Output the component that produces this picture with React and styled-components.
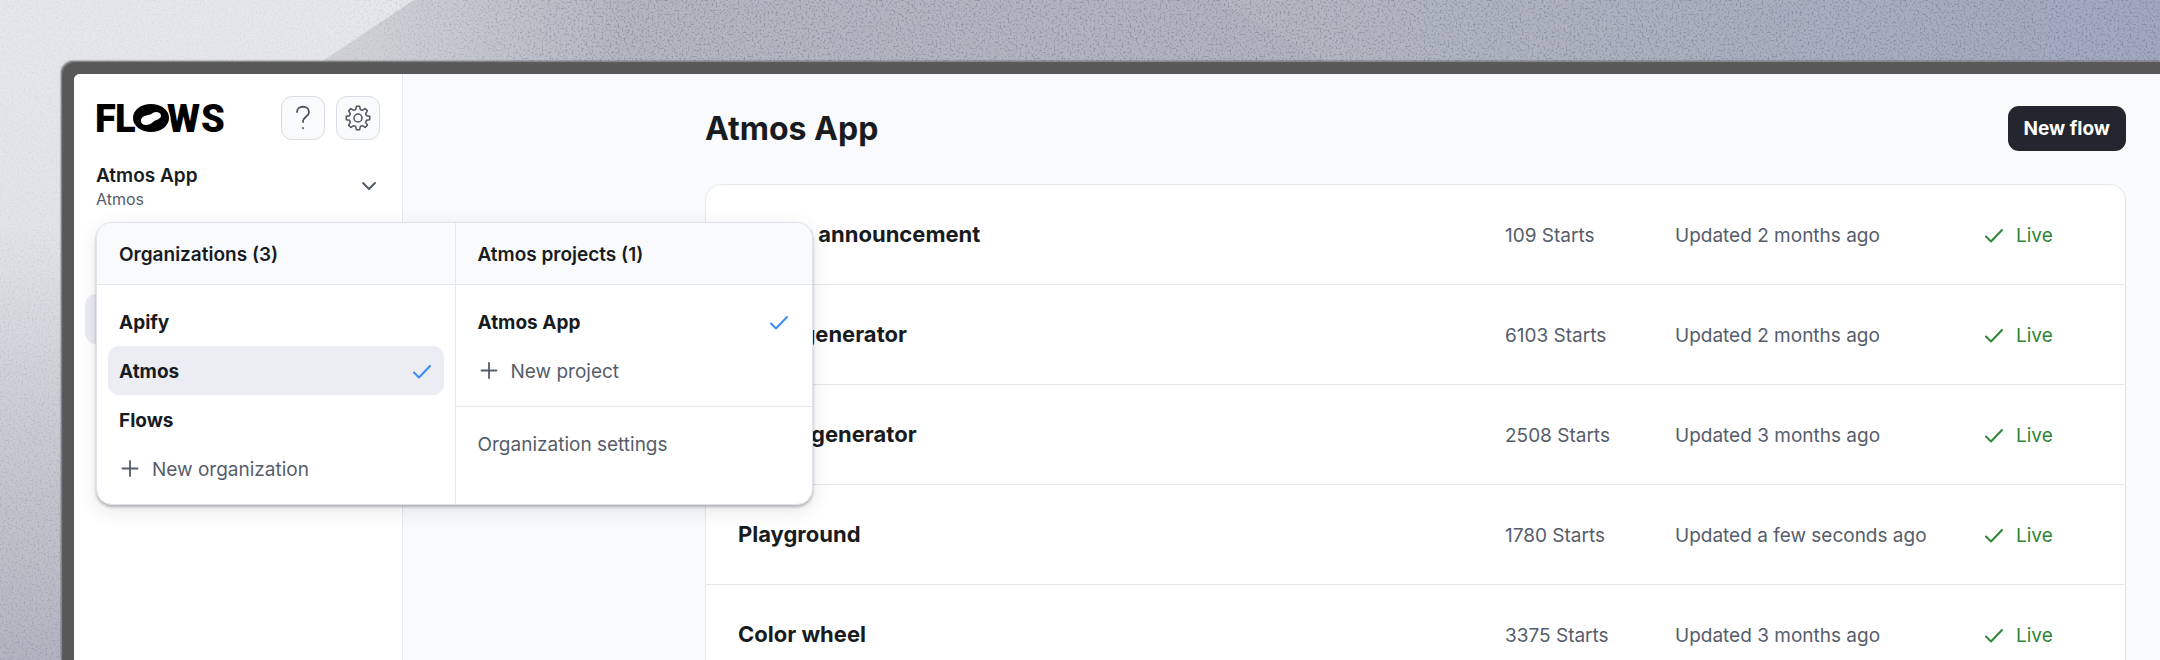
import React from "react";
import styled, { createGlobalStyle, css } from "styled-components";

const GlobalStyle = createGlobalStyle`
  *, *::before, *::after { box-sizing: border-box; }
  body {
    margin: 0;
    overflow: hidden;
    font-family: Inter, "Liberation Sans", sans-serif;
    font-size: 19px;
    line-height: 24px;
    color: #181b20;
  }
  button { font: inherit; color: inherit; background: none; border: 0; padding: 0; cursor: pointer; }
  h1, h2, p, ul { margin: 0; padding: 0; }
  ul { list-style: none; }
`;

const c = {
  ink: "#181b20",
  muted: "#565d6a",
  line: "#e4e7ec",
  soft: "#f9fafc",
  hover: "#ecedf3",
  blue: "#3b8bfa",
  green: "#2e8533",
};

const Desktop = styled.div`
  position: relative;
  height: 100vh;
  padding: 61px 0 0 61px;
  overflow: hidden;
  background: #b9bcc6;
`;

const Wallpaper = styled.svg`
  position: absolute;
  inset: 0;
  width: 100%;
  height: 100%;
`;

const Device = styled.div`
  position: relative;
  height: 100%;
  padding: 13px 0 0 13px;
  border-radius: 13px 0 0 0;
  background: #585858;
  box-shadow: inset 1px 1px 1px #8a8a8a, -1px -1px 1px rgba(60, 60, 70, 0.25);
`;

const Screen = styled.div`
  display: flex;
  height: 100%;
  border-radius: 6px 0 0 0;
  overflow: hidden;
  background: ${c.soft};
`;

const Sidebar = styled.aside`
  position: relative;
  z-index: 1;
  flex: 0 0 329px;
  padding: 22px;
  background: #fff;
  border-right: 1px solid ${c.line};
`;

const SidebarTop = styled.div`
  display: flex;
  align-items: center;
  gap: 11px;
`;

const Logo = styled.svg`
  width: 128px;
  height: 28px;
  margin-right: auto;
  overflow: visible;
  font-family: Roboto, sans-serif;
  font-weight: 900;
  font-size: 38px;
`;

const IconButton = styled.button`
  display: grid;
  place-items: center;
  width: 44px;
  height: 44px;
  border: 1px solid #d9dce4;
  border-radius: 11px;
  color: #4f5561;
  background: ${c.soft};
`;

const Icon = styled.svg`
  display: block;
  flex: none;
  fill: none;
  stroke: currentColor;
  stroke-linecap: round;
  stroke-linejoin: round;
`;

const Switcher = styled.div`
  position: relative;
  margin-top: 24px;
`;

const SwitcherButton = styled.button`
  display: flex;
  align-items: center;
  justify-content: space-between;
  width: 100%;
  padding-right: 3px;
  text-align: left;
  color: ${c.muted};
`;

const SwitcherName = styled.span`
  display: block;
  font-weight: 600;
  color: ${c.ink};
`;

const SwitcherOrg = styled.span`
  display: block;
  font-size: 16px;
  line-height: 22px;
`;

const Nav = styled.nav`
  margin: 84px -11px 0;
`;

const NavItem = styled.a`
  display: block;
  height: 50px;
  border-radius: 11px;
  background: ${c.hover};
`;

const Popover = styled.div`
  position: absolute;
  z-index: 2;
  top: 100%;
  left: 0;
  margin-top: 12px;
  width: 717px;
  display: grid;
  grid-template-columns: 1fr 1fr;
  border: 1px solid #dfe2e8;
  border-radius: 16px;
  background: #fff;
  box-shadow: 0 2px 3px rgba(20, 22, 28, 0.28), 0 6px 20px rgba(20, 22, 28, 0.1);
`;

const Column = styled.section`
  & + & { border-left: 1px solid ${c.line}; }
`;

const ColumnTitle = styled.h2`
  padding: 19px 22px 17px;
  font-size: 19px;
  line-height: 25px;
  font-weight: 600;
  background: ${c.soft};
  border-bottom: 1px solid ${c.line};
  border-radius: ${(p) => (p.$end ? "0 15px 0 0" : "15px 0 0 0")};
`;

const Menu = styled.ul`
  padding: 12px 11px 11px;
  & + & { border-top: 1px solid ${c.line}; }
`;

const MenuItem = styled.button`
  display: flex;
  align-items: center;
  width: 100%;
  height: 49px;
  padding: 2px 11px 0;
  border-radius: 11px;
  text-align: left;
  font-weight: 700;
  ${(p) => p.$selected && css`background: ${c.hover};`}
  ${(p) => p.$plain && css`font-weight: 400; color: ${c.muted}; gap: 11px;`}
`;

const Tick = styled(Icon)`
  margin-left: auto;
  color: ${c.blue};
`;

const Main = styled.main`
  flex: 1;
  min-width: 0;
  padding: 32px 34px 0 302px;
`;

const PageHead = styled.header`
  display: flex;
  align-items: center;
  justify-content: space-between;
  margin-bottom: 33px;
`;

const PageTitle = styled.h1`
  font-size: 32px;
  line-height: 44px;
  font-weight: 700;
`;

const PrimaryButton = styled.button`
  height: 45px;
  padding: 0 16px;
  border-radius: 11px;
  font-weight: 700;
  color: #fff;
  background: #23262e;
`;

const FlowList = styled.ul`
  border: 1px solid ${c.line};
  border-radius: 16px;
  background: #fff;
`;

const FlowRow = styled.li`
  display: grid;
  grid-template-columns: 1fr 170px 310px 108px;
  align-items: center;
  min-height: 100px;
  padding: 2px 32px 0;
  color: ${c.muted};
  border-bottom: 1px solid ${c.line};
`;

const FlowName = styled.a`
  justify-self: start;
  padding-bottom: 4px;
  font-size: 22px;
  line-height: 30px;
  font-weight: 700;
  color: ${c.ink};
  text-decoration: none;
`;

const Status = styled.span`
  display: flex;
  align-items: center;
  gap: 11px;
  color: ${c.green};
`;

const CheckIcon = ({ as: Base = Icon }) => (
  <Base width="20" height="20" viewBox="0 0 20 20" strokeWidth="2" aria-hidden="true">
    <path d="M1 10.500l5 5L17 4" />
  </Base>
);

const PlusIcon = () => (
  <Icon width="22" height="22" viewBox="0 0 22 22" strokeWidth="1.8" aria-hidden="true">
    <path d="M11 2v15M3.500 9.500h15" />
  </Icon>
);

const flows = [
  { name: "Photos announcement", starts: 109, updated: "2 months ago" },
  { name: "Color generator", starts: 6103, updated: "2 months ago" },
  { name: "Shape generator", starts: 2508, updated: "3 months ago" },
  { name: "Playground", starts: 1780, updated: "a few seconds ago" },
  { name: "Color wheel", starts: 3375, updated: "3 months ago" },
];

const organizations = ["Apify", "Atmos", "Flows"];

const gear = (() => {
  const pts = [];
  const n = 8;
  for (let i = 0; i < n; i++) {
    const a = (i * 2 * Math.PI) / n - Math.PI / 2;
    [[-0.27, 8.8], [-0.14, 11.8], [0.14, 11.8], [0.27, 8.8]].forEach(([d, r]) =>
      pts.push(`${(13 + r * Math.cos(a + d)).toFixed(2)} ${(13 + r * Math.sin(a + d)).toFixed(2)}`)
    );
  }
  return `M${pts.join("L")}Z`;
})();

export default function App() {
  return (
    <Desktop>
      <GlobalStyle />
      <Wallpaper viewBox="0 0 2160 660" preserveAspectRatio="xMinYMin slice" aria-hidden="true">
        <defs>
          <linearGradient id="sky" x1="0" y1="0" x2="1" y2="0">
            <stop offset="0" stopColor="#bcbfc9" />
            <stop offset="0.3" stopColor="#b4b7c2" />
            <stop offset="0.6" stopColor="#b0b3bf" />
            <stop offset="0.75" stopColor="#a8adbb" />
            <stop offset="1" stopColor="#9da3bb" />
          </linearGradient>
          <linearGradient id="glow" x1="0" y1="0" x2="0" y2="1">
            <stop offset="0" stopColor="#e6e7ea" />
            <stop offset="0.35" stopColor="#e2e3e7" />
            <stop offset="0.6" stopColor="#cdcfd5" />
            <stop offset="0.8" stopColor="#bfc2ca" />
            <stop offset="1" stopColor="#b2b5c1" />
          </linearGradient>
          <linearGradient id="edge" gradientUnits="userSpaceOnUse" x1="360" y1="0" x2="620" y2="0">
            <stop offset="0" stopColor="#d0d1d5" />
            <stop offset="1" stopColor="#d0d1d5" stopOpacity="0" />
          </linearGradient>
          <linearGradient id="fade" gradientUnits="userSpaceOnUse" x1="0" y1="0" x2="2160" y2="0">
            <stop offset="0.15" stopColor="#fff" stopOpacity="0.1" />
            <stop offset="0.28" stopColor="#fff" stopOpacity="0.6" />
            <stop offset="1" stopColor="#fff" stopOpacity="0.6" />
          </linearGradient>
          <linearGradient id="fadeDown" gradientUnits="userSpaceOnUse" x1="0" y1="200" x2="0" y2="660">
            <stop offset="0" stopColor="#fff" stopOpacity="0" />
            <stop offset="1" stopColor="#fff" stopOpacity="0.3" />
          </linearGradient>
          <mask id="grainMask" maskUnits="userSpaceOnUse" x="0" y="0" width="2160" height="660">
            <rect width="2160" height="660" fill="url(#fade)" />
            <rect width="62" height="660" fill="url(#fadeDown)" />
          </mask>
          <filter id="grain" x="0" y="0" width="100%" height="100%" colorInterpolationFilters="sRGB">
            <feTurbulence type="fractalNoise" baseFrequency="0.5" numOctaves="2" seed="4" />
            <feColorMatrix values="0 0 0 0 0.36  0 0 0 0 0.39  0 0 0 0 0.48  2.2 0 0 0 -1.05" />
          </filter>
        </defs>
        <rect width="2160" height="660" fill="url(#sky)" />
        <path d="M414 0H700V61H323Z" fill="url(#edge)" />
        <path d="M1218 0H2160V61H1325Z" fill="#fff" fillOpacity="0.06" />
        <path d="M0 0H414L323 61V660H0Z" fill="url(#glow)" />
        <g mask="url(#grainMask)">
          <rect width="2160" height="660" filter="url(#grain)" />
        </g>
      </Wallpaper>
      <Device>
        <Screen>
          <Sidebar>
            <SidebarTop>
              <Logo viewBox="0 0 128 28" role="img" aria-label="Flows">
                <text x="-1" y="28">F</text>
                <text x="19" y="28">L</text>
                <text x="71" y="28">W</text>
                <text x="105" y="28">S</text>
                <ellipse cx="55" cy="14" rx="19.500" ry="15" fill="#fff" />
                <ellipse cx="55" cy="14" rx="18" ry="14" />
                <path d="M45 17c0-4 3-5 7-6 4 0 4-3 8-3 5 0 6 4 4 6s-5 2-7 4c-4 4-12 4-12-1z" fill="#fff" />
              </Logo>
              <IconButton aria-label="Help">
                <Icon width="26" height="26" viewBox="0 0 26 26" strokeWidth="1.8">
                  <path d="M7 7c0-7 12-7 12 0 0 5-6 4-6 10" />
                  <path d="M13 23v.3" />
                </Icon>
              </IconButton>
              <IconButton aria-label="Settings">
                <Icon width="26" height="26" viewBox="0 0 26 26" strokeWidth="1.5">
                  <path d={gear} />
                  <circle cx="13" cy="13" r="4" />
                </Icon>
              </IconButton>
            </SidebarTop>
            <Switcher>
              <SwitcherButton aria-expanded="true">
                <span>
                  <SwitcherName>Atmos App</SwitcherName>
                  <SwitcherOrg>Atmos</SwitcherOrg>
                </span>
                <Icon width="16" height="16" viewBox="0 0 16 16" strokeWidth="2" aria-hidden="true">
                  <path d="M2 4l6 6 6-6" />
                </Icon>
              </SwitcherButton>
              <Popover>
                <Column>
                  <ColumnTitle>Organizations (3)</ColumnTitle>
                  <Menu>
                    {organizations.map((name) => (
                      <li key={name}>
                        <MenuItem $selected={name === "Atmos"}>
                          {name}
                          {name === "Atmos" && <CheckIcon as={Tick} />}
                        </MenuItem>
                      </li>
                    ))}
                    <li>
                      <MenuItem $plain>
                        <PlusIcon />
                        New organization
                      </MenuItem>
                    </li>
                  </Menu>
                </Column>
                <Column>
                  <ColumnTitle $end>Atmos projects (1)</ColumnTitle>
                  <Menu>
                    <li>
                      <MenuItem>
                        Atmos App
                        <CheckIcon as={Tick} />
                      </MenuItem>
                    </li>
                    <li>
                      <MenuItem $plain>
                        <PlusIcon />
                        New project
                      </MenuItem>
                    </li>
                  </Menu>
                  <Menu>
                    <li>
                      <MenuItem $plain>Organization settings</MenuItem>
                    </li>
                  </Menu>
                </Column>
              </Popover>
            </Switcher>
            <Nav>
              <NavItem href="#flows" aria-label="Flows" />
            </Nav>
          </Sidebar>
          <Main>
            <PageHead>
              <PageTitle>Atmos App</PageTitle>
              <PrimaryButton>New flow</PrimaryButton>
            </PageHead>
            <FlowList>
              {flows.map((flow) => (
                <FlowRow key={flow.name}>
                  <FlowName href="#flow">{flow.name}</FlowName>
                  <span>{flow.starts} Starts</span>
                  <span>Updated {flow.updated}</span>
                  <Status>
                    <CheckIcon />
                    Live
                  </Status>
                </FlowRow>
              ))}
            </FlowList>
          </Main>
        </Screen>
      </Device>
    </Desktop>
  );
}
